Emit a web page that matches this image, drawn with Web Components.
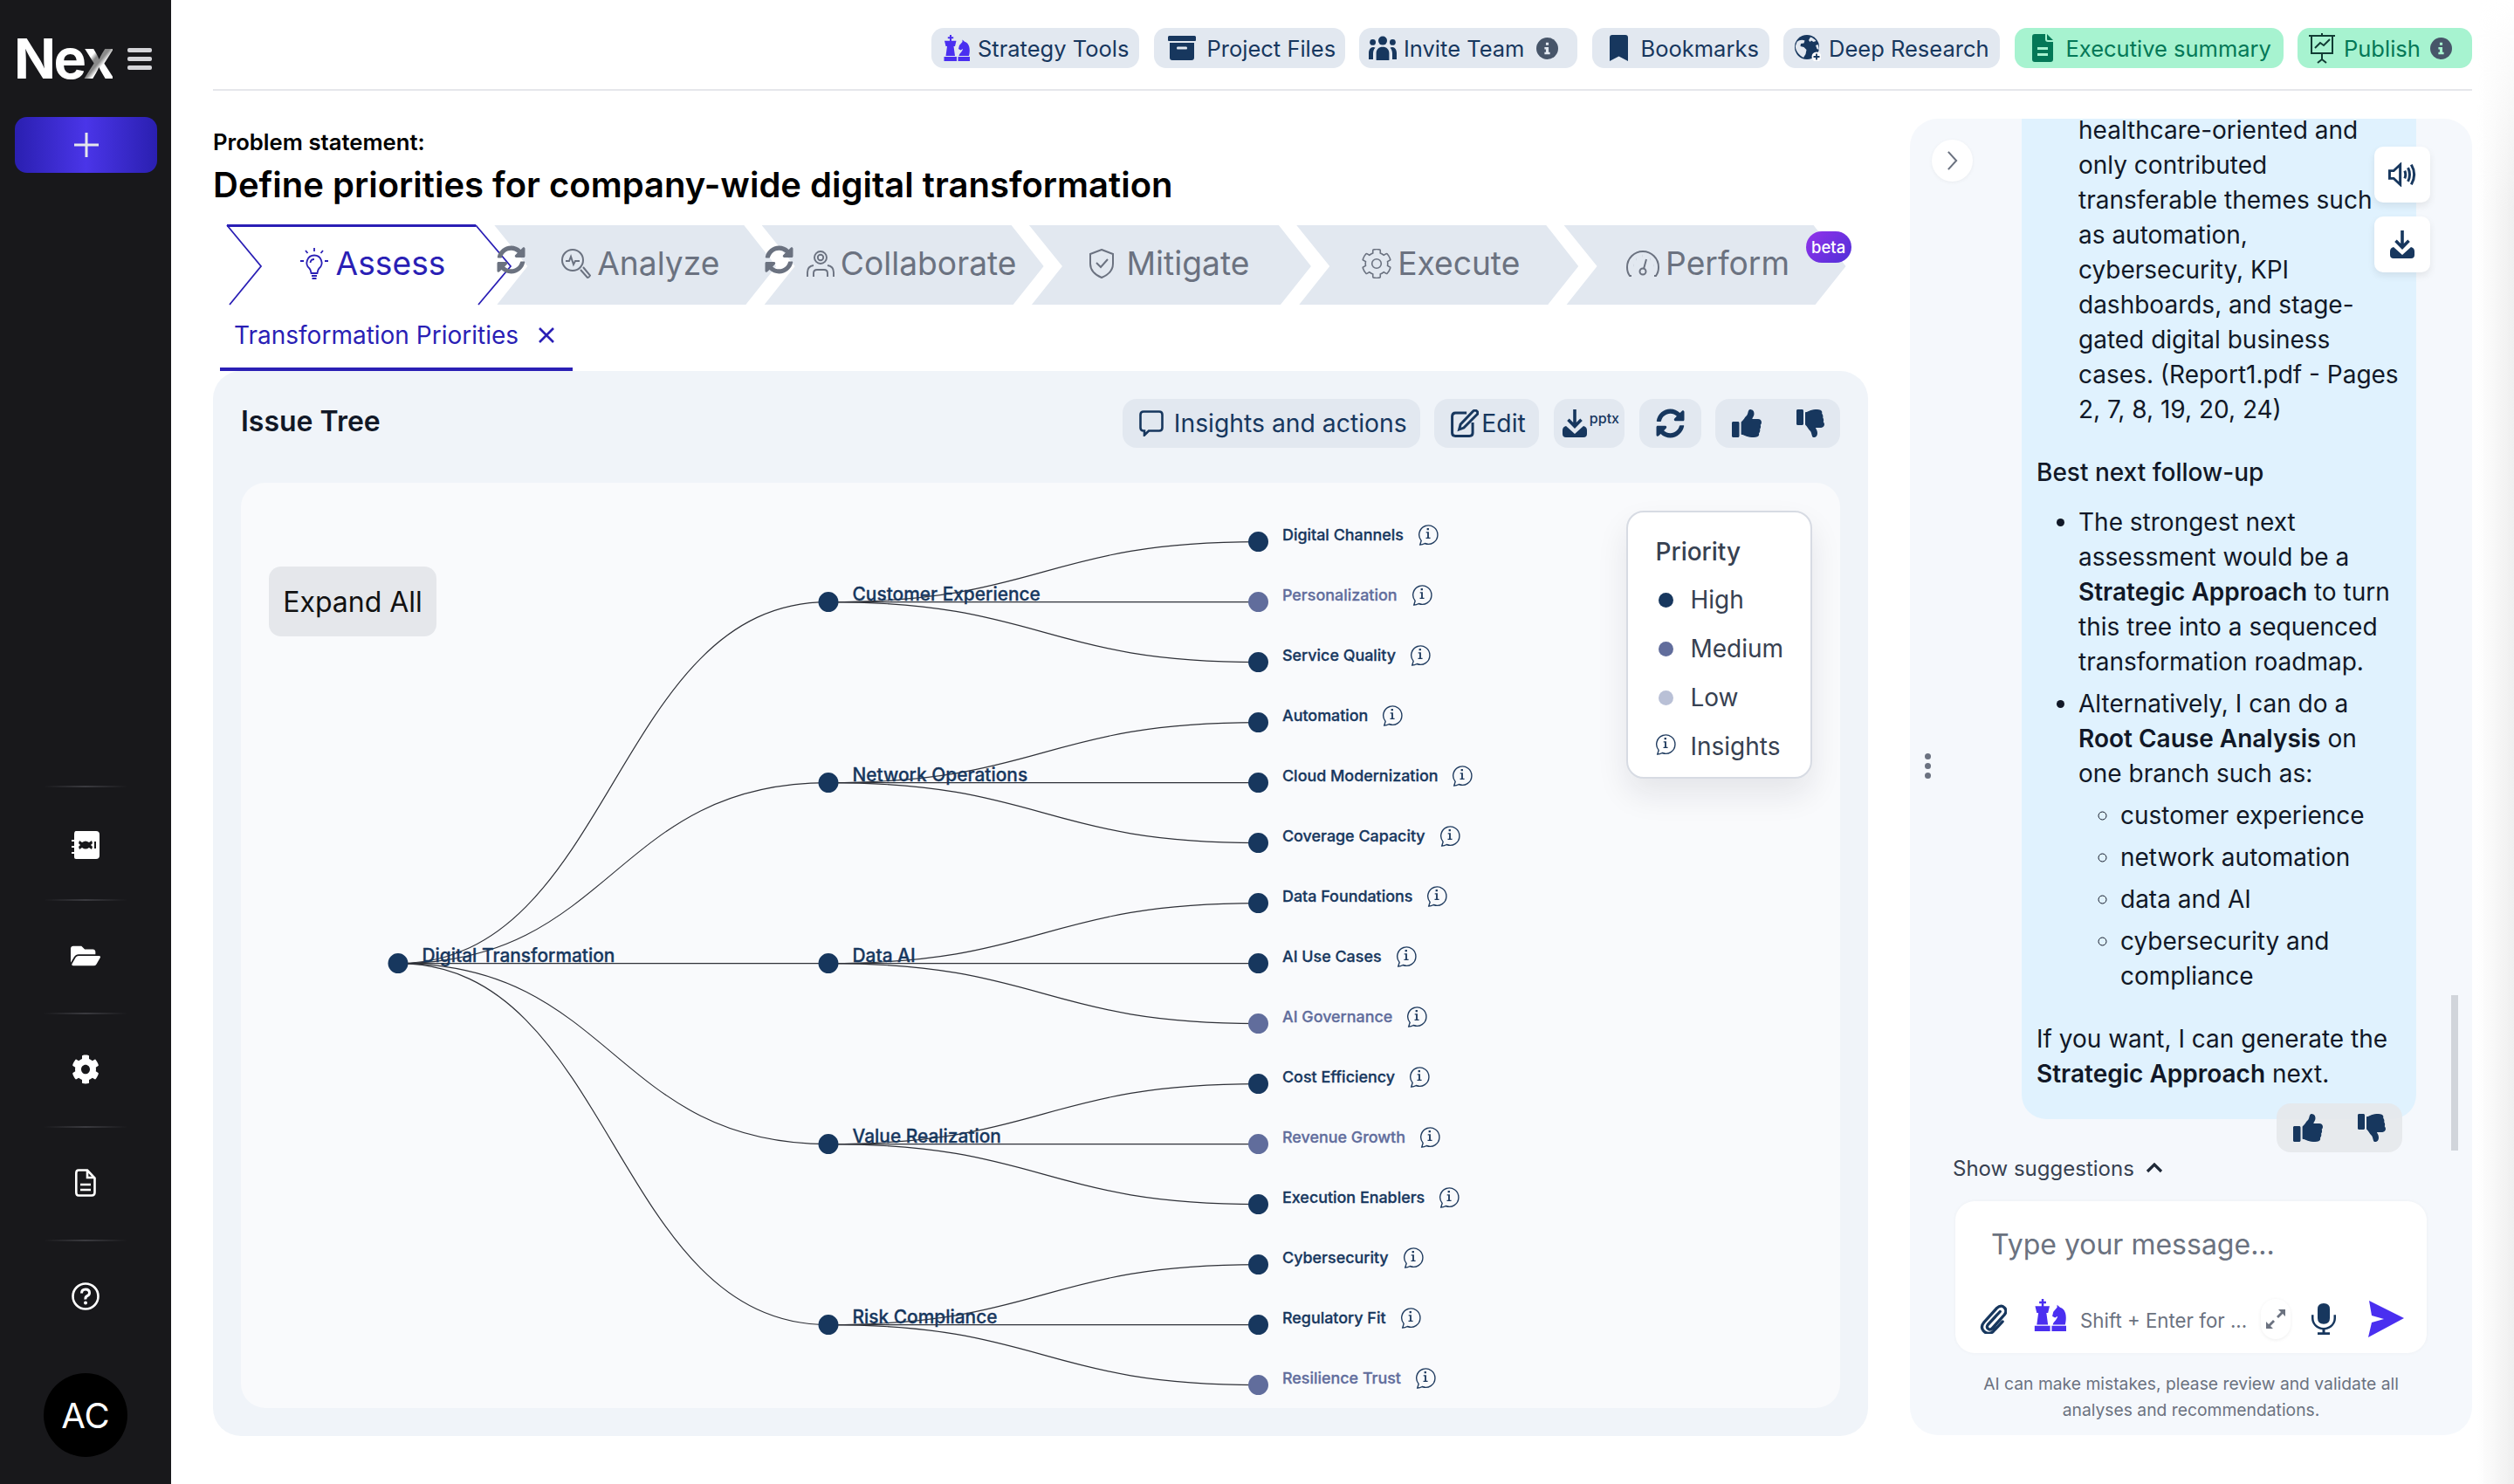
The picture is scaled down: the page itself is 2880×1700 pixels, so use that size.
<!DOCTYPE html>
<html lang="en">
<head>
<meta charset="utf-8">
<title>Nex</title>
<style>
  html, body { margin: 0; padding: 0; background: #fff; }
  body { font-family: Inter, "Noto Sans", "Liberation Sans", sans-serif; color: #111827; }
</style>
</head>
<body>
<app-shell>
  <side-bar slot="side"></side-bar>
  <top-bar slot="top">
    <tool-chip icon="chess" iw="31" ih="30" style="width:238px;--pl:13px;--gap:9px;--icon:#4a2ff0">Strategy Tools</tool-chip>
    <tool-chip icon="archive" iw="32" ih="28" style="width:219px;--pl:16px;--gap:13px">Project Files</tool-chip>
    <tool-chip icon="users" iw="32" ih="28" info style="width:250px;--pl:11px;--gap:8px">Invite Team</tool-chip>
    <tool-chip icon="bookmark" iw="21" ih="30" style="width:203px;--pl:20px;--gap:15px">Bookmarks</tool-chip>
    <tool-chip icon="globe" iw="30" ih="30" style="width:248px;--pl:13px;--gap:9px">Deep Research</tool-chip>
    <tool-chip icon="filegreen" iw="24" ih="32" green style="width:308px;--pl:20px;--gap:15px;--icon:#047857">Executive summary</tool-chip>
    <tool-chip icon="board" iw="30" ih="36" green info style="width:200px;--pl:13px;--gap:10px;--icon:#123c34">Publish</tool-chip>
  </top-bar>
  <problem-head slot="left"></problem-head>
  <step-bar slot="left">
    <step-item active icon="bulb" iw="32" ih="36" style="--shift:11px;--g:9px">Assess</step-item>
    <step-item refresh icon="search" iw="34" ih="34" style="--shift:12px">Analyze</step-item>
    <step-item refresh icon="team" iw="32" ih="30" style="--shift:20px">Collaborate</step-item>
    <step-item icon="shield" iw="30" ih="34" style="--shift:-2px;--g:13px">Mitigate</step-item>
    <step-item icon="cog" iw="34" ih="34" style="--shift:8px">Execute</step-item>
    <step-item beta icon="gauge" iw="38" ih="30" style="--shift:7px">Perform</step-item>
  </step-bar>
  <sub-tab slot="left">Transformation Priorities</sub-tab>
  <issue-card slot="left">
    <tree-canvas></tree-canvas>
  </issue-card>
  <chat-panel slot="right">
    <chat-message></chat-message>
  </chat-panel>
</app-shell>

<script>
const NAVY = '#17375e';
const THUMB = 'M104 224H24c-13.255 0-24 10.745-24 24v240c0 13.255 10.745 24 24 24h80c13.255 0 24-10.745 24-24V248c0-13.255-10.745-24-24-24zM384 81.452c0 42.416-25.97 66.208-33.277 94.548h101.723c33.397 0 59.397 27.746 59.553 58.098.084 17.938-7.546 37.249-19.439 49.197l-.11.11c9.836 23.337 8.237 56.037-9.308 79.469 8.681 25.895-.069 57.704-16.382 74.757 4.298 17.598 2.244 32.575-6.148 44.632C440.202 511.587 389.616 512 346.839 512l-2.845-.001c-48.287-.017-87.806-17.598-119.56-31.725-15.957-7.099-36.821-15.887-52.651-16.178-6.54-.12-11.783-5.457-11.783-11.998v-213.77c0-3.2 1.282-6.271 3.558-8.521 39.614-39.144 56.648-80.587 89.117-113.111 14.804-14.832 20.188-37.236 25.393-58.902C282.515 39.293 291.817 0 312 0c24 0 72 8 72 81.452z';
const SYNC = 'M370.72 133.28C339.458 104.008 298.888 87.962 255.848 88c-77.458.068-144.328 53.178-162.791 126.85-1.344 5.363-6.122 9.15-11.651 9.15H24.103c-7.498 0-13.194-6.807-11.807-14.176C33.933 94.924 134.813 8 256 8c66.448 0 126.791 26.136 171.315 68.685L463.03 40.97C478.149 25.851 504 36.559 504 57.941V192c0 13.255-10.745 24-24 24H345.941c-21.382 0-32.09-25.851-16.971-40.971l41.75-41.749zM32 296h134.059c21.382 0 32.09 25.851 16.971 40.971l-41.75 41.75c31.262 29.273 71.835 45.319 114.876 45.28 77.418-.07 144.315-53.144 162.787-126.849 1.344-5.363 6.122-9.15 11.651-9.15h57.304c7.498 0 13.193 6.807 11.807 14.176C478.067 417.076 377.187 504 256 504c-66.448 0-126.791-26.136-171.315-68.685L48.97 471.03C33.851 486.149 8 475.441 8 454.059V320c0-13.255 10.745-24 24-24z';
const COG = 'M487.4 315.7l-42.6-24.6c4.3-23.2 4.3-47 0-70.2l42.6-24.6c4.9-2.8 7.1-8.6 5.5-14-11.1-35.6-30-67.8-54.7-94.6-3.8-4.1-10-5.1-14.8-2.3L380.8 110c-17.9-15.4-38.5-27.3-60.8-35.1V25.8c0-5.6-3.9-10.5-9.4-11.7-36.7-8.2-74.3-7.8-109.2 0-5.5 1.2-9.4 6.1-9.4 11.7V75c-22.2 7.9-42.8 19.8-60.8 35.1L88.7 85.5c-4.9-2.8-11-1.9-14.8 2.3-24.7 26.7-43.6 58.9-54.7 94.6-1.7 5.4.6 11.2 5.5 14L67.3 221c-4.3 23.2-4.3 47 0 70.2l-42.6 24.6c-4.9 2.8-7.1 8.6-5.5 14 11.1 35.6 30 67.8 54.7 94.6 3.8 4.1 10 5.1 14.8 2.3l42.6-24.6c17.9 15.4 38.5 27.3 60.8 35.1v49.2c0 5.6 3.9 10.5 9.4 11.7 36.7 8.2 74.3 7.8 109.2 0 5.5-1.2 9.4-6.1 9.4-11.7v-49.2c22.2-7.9 42.8-19.8 60.8-35.1l42.6 24.6c4.9 2.8 11 1.9 14.8-2.3 24.7-26.7 43.6-58.9 54.7-94.6 1.5-5.5-.7-11.3-5.6-14.1zM256 336c-44.1 0-80-35.9-80-80s35.9-80 80-80 80 35.9 80 80-35.9 80-80 80z';

// every icon is [viewBox, inner svg]
const ICONS = {
  chess: ['0 0 31 30', '<path fill="currentColor" d="M8 0h2v2.200h2.200v2H10v2.500h5.500L14 13h-1.500L14 24H3.500L5 13H3.500L2 6.700h6V4.200H5.800v-2H8zM1.500 25H16v5H1.500zM17.500 25H31v5H17.500zM18.500 24c.5-3 4-4.500 4.500-8l-2.500 1.500-2.500-1.500 1-4 3.500-4V5.500l2.800 2.500c3 .5 5.500 4 5.500 9.500 0 2.500-.3 4.500-.8 6.500z"/>'],
  archive: ['0 0 32 28', '<path fill="currentColor" fill-rule="evenodd" d="M1.500 0h29Q32 0 32 1.500V5q0 1-1 1H1Q0 6 0 5V1.500Q0 0 1.500 0zM2 8h28v17q0 3-3 3H5q-3 0-3-3zM11 12.500q-1 0-1 1.500t1 1.500h10q1 0 1-1.500t-1-1.500z"/>'],
  users: ['0 0 32 28', '<g fill="currentColor"><circle cx="16" cy="5.600" r="5"/><circle cx="4.600" cy="7.400" r="3.400"/><circle cx="27.400" cy="7.400" r="3.400"/><path d="M8.600 28v-8c0-4.600 3-7.200 7.400-7.200s7.400 2.600 7.400 7.200v8zM0 27v-7c0-4 2-7 5-7 1 0 1.800.2 2.500.7-1.700 1.700-2.500 3.900-2.500 6.600v6.700zM32 27v-7c0-4-2-7-5-7-1 0-1.800.2-2.500.7 1.700 1.700 2.500 3.900 2.500 6.600v6.700z"/></g>'],
  bookmark: ['0 0 21 30', '<path fill="currentColor" d="M3 0h15q3 0 3 3v27l-10.500-5.500L0 30V3q0-3 3-3z"/>'],
  globe: ['0 0 30 30', '<circle cx="14" cy="14" r="14" fill="currentColor"/><path fill="#e2e8f0" d="M2.500 8c2.500-2 6-3 9-1.500l-1 3-3.500.5-.5 3 4 1 3 3-1 5-2.500 4C6 24 1 19 .8 13zM18 2.500c3 1 5 2.500 6.500 4.500l-3 1-2.500-1.500-1.500 1.500-1.500-2zM24 12l2.500-1c1 2 1.300 4 1.200 6l-2.200-1z"/><circle cx="25" cy="25" r="5.500" fill="#fff"/><path stroke="currentColor" stroke-width="1.800" d="M25 21.500v7M21.500 25h7"/>'],
  filegreen: ['0 0 24 32', '<path fill="currentColor" d="M3 0h12v6q0 3 3 3h6v20q0 3-3 3H3q-3 0-3-3V3q0-3 3-3zM17 0l7 7h-6q-1 0-1-1z"/><path fill="#a7f3d0" d="M6 15h12v3H6zM6 22h12v3H6z"/>'],
  board: ['0 0 30 36', '<g fill="none" stroke="currentColor" stroke-width="2"><path d="M0 4h30M3 4v20h24V4M7 18l6-6 4 3 7-7M15 1v3M15 24v7M10 35l5-4 5 4"/></g>'],
  info: ['0 0 24 24', '<circle cx="12" cy="12" r="12" fill="#475569"/><path fill="#e2e8f0" d="M10.500 5.500h3v3h-3zM9 10.500h4.500V16H15v2.500H9V16h1.500v-3H9z"/>'],
  infoG: ['0 0 24 24', '<circle cx="12" cy="12" r="12" fill="#475569"/><path fill="#a7f3d0" d="M10.500 5.500h3v3h-3zM9 10.500h4.500V16H15v2.500H9V16h1.500v-3H9z"/>'],
  bulb: ['0 0 32 36', '<g fill="none" stroke="currentColor" stroke-width="1.800"><path d="M16 8.500a8.500 8.500 0 0 0-5.500 15c1.500 1.500 1.500 3 2 5.500h7c.5-2.500.5-4 2-5.500a8.500 8.500 0 0 0-5.500-15zM13 32h6M13.500 35h5M11.500 17a4.500 4.500 0 0 1 4.500-4"/><path d="M16 0v4M6 3l2.500 3M26 3l-2.500 3M0 15h4M28 15h4"/></g>'],
  search: ['0 0 34 34', '<g fill="none" stroke="currentColor" stroke-width="2"><circle cx="13" cy="13" r="12"/><path d="M5 14h4l2-5 3 9 2-4h5"/><path d="M22 24l8 9q2 0 3-2.500L25 21"/></g>'],
  team: ['0 0 32 30', '<g fill="none" stroke="currentColor" stroke-width="1.900"><circle cx="16" cy="8" r="3.200"/><circle cx="16" cy="8" r="7"/><path d="M1 30v-5q0-7 7-8M31 30v-5q0-7-7-8M8 30v-4q0-4 4-4h8q4 0 4 4v4"/></g>'],
  shield: ['0 0 30 34', '<g fill="none" stroke="currentColor" stroke-width="2"><path d="M15 1l13 5v11c0 8-6 13-13 16C8 30 2 25 2 17V6z"/><path d="M9 16l5 5 8-9"/></g>'],
  cog: ['0 0 512 512', `<path fill="none" stroke="currentColor" stroke-width="24" d="${COG}"/>`],
  gauge: ['0 0 38 30', '<g fill="none" stroke="currentColor" stroke-width="2"><path d="M6 29H4Q1 25 1 19a18 18 0 0 1 36 0q0 6-3 10h-2"/><circle cx="19" cy="24" r="3.500"/><path d="M20 21l3-11"/><path d="M8 17h.1M11 10h.1M18 6h.1M27 10h.1M31 17h.1" stroke-width="2.400"/></g>'],
  sync: ['0 0 512 512', `<path fill="currentColor" d="${SYNC}"/>`],
  up: ['0 0 512 512', `<path fill="currentColor" d="${THUMB}"/>`],
  down: ['0 0 512 512', `<path fill="currentColor" transform="matrix(1 0 0 -1 0 512)" d="${THUMB}"/>`],
  bubble: ['0 0 28 30', '<path fill="none" stroke="currentColor" stroke-width="2.600" d="M5 1.500h18q3.500 0 3.500 3.500v15q0 3.500-3.500 3.500H11l-5 5v-5H5q-3.500 0-3.500-3.500V5Q1.500 1.500 5 1.500z"/>'],
  edit: ['0 0 30 32', '<g fill="none" stroke="currentColor" stroke-width="2.800"><path d="M17 4H5Q1.500 4 1.500 8v19q0 3.500 3.500 3.500h15q3.500 0 3.500-3.500V15"/><path d="M9 23l1.500-6L24 2q2-2 4 0t0 4L14 21z"/></g>'],
  dl: ['0 0 28 32', '<path fill="currentColor" d="M12.200 0h3.600v15l4.500-4.500 2.500 2.500-8.800 9-8.800-9 2.500-2.500 4.500 4.500zM0 24q0-4 4-5l10 9 10-9q4 1 4 5v4q0 4-4 4H4q-4 0-4-4z"/>'],
  speaker: ['0 0 34 32', '<g fill="none" stroke="currentColor" stroke-width="3.200"><path d="M1.500 11v10h5l8 8V3l-8 8z"/><path d="M20 11q2 5 0 10M24 7q4 9 0 18M28 3q7 13 0 26"/></g>'],
  chevR: ['0 0 14 26', '<path fill="none" stroke="currentColor" stroke-width="2.200" d="M2 2l10 11L2 24"/>'],
  chevU: ['0 0 20 12', '<path fill="none" stroke="currentColor" stroke-width="3.200" d="M2 10l8-8 8 8"/>'],
  clip: ['0 0 32 36', '<path fill="none" stroke="currentColor" stroke-width="3.400" stroke-linecap="round" d="M24 9L9.500 25q-2 3 .5 5t5-1L29 13q4-5 0-9t-9 1L5 22q-5 6 0 11t11 0l11-12"/>'],
  expand: ['0 0 24 24', '<path fill="currentColor" d="M15 1h8v8l-3-3-5 5-2-2 5-5zM9 23H1v-8l3 3 5-5 2 2-5 5z"/>'],
  mic: ['0 0 28 38', '<path fill="currentColor" d="M14 0q7 0 7 7v11q0 7-7 7t-7-7V7q0-7 7-7zM2.500 14v4c0 6.500 5 11.500 11.500 11.500S25.500 24.500 25.500 18v-4H28v4c0 7-5 13-12.500 14v3H21v3H7v-3h5.500v-3C5 31 0 25 0 18v-4z"/>'],
  send: ['0 0 42 42', '<path fill="currentColor" d="M2 0l40 20L1 42l4-17 14-4-14-4z"/>'],
  addr: ['0 0 32 32', '<path fill="currentColor" fill-rule="evenodd" d="M5 0h23q4 0 4 4v24q0 4-4 4H5q-2 0-2-2v-4H0v-2h3v-5H0v-2h3v-5H0v-2h3V4q0-4 2-4zM9 11l3 2q4-3 8 0l3-2 1 3-2 2 2 2-1 3-3-2q-4 3-8 0l-3 2-1-3 2-2-2-2zM26 12v8h2v-8z"/>'],
  folder: ['0 0 576 512', '<path fill="currentColor" d="M572.694 292.093L500.27 416.248A63.997 63.997 0 0 1 444.989 448H45.025c-18.523 0-30.064-20.093-20.731-36.093l72.424-124.155A64 64 0 0 1 152 256h399.964c18.523 0 30.064 20.093 20.73 36.093zM152 224h328v-48c0-26.51-21.49-48-48-48H272l-64-64H48C21.49 64 0 85.49 0 112v278.046l69.077-118.418C86.214 242.25 117.989 224 152 224z"/>'],
  gear: ['0 0 512 512', `<path fill="currentColor" d="${COG}"/>`],
  doc: ['0 0 24 32', '<g fill="none" stroke="currentColor" stroke-width="2.600"><path d="M4 1.500h10l8.500 9V27q0 3.500-3.500 3.500H4Q1.300 30.500 1.300 27V5Q1.300 1.500 4 1.500zM14 1.500V10h8.500"/><path d="M6 18h12M6 24h12"/></g>'],
  help: ['0 0 32 32', '<circle cx="16" cy="16" r="14.500" fill="none" stroke="currentColor" stroke-width="2.600"/><path fill="none" stroke="currentColor" stroke-width="3" d="M11.500 12.500q0-4.500 4.500-4.500t4.500 4q0 2.500-2.500 3.500t-2 4"/><circle cx="16" cy="23.500" r="2" fill="currentColor"/>'],
  tip: ['0 0 26 28', '<path fill="none" stroke="currentColor" stroke-width="1.500" d="M3 27l1.500-5A11.500 11.500 0 1 1 9 25.300q-3 1.700-6 1.700z"/><path fill="currentColor" d="M11.500 6.500h2.500v2.500h-2.500zM10.500 11h3.500v7h1.800v1.500h-5.500V18h1.700v-5.500h-1.500z"/>']
};

class UiIcon extends HTMLElement {
  connectedCallback() {
    if (this.shadowRoot) return;
    const [box, inner] = ICONS[this.getAttribute('name')];
    const w = this.getAttribute('w') || 24, h = this.getAttribute('h') || w;
    this.attachShadow({ mode: 'open' }).innerHTML = `
      <style>:host{display:inline-flex;flex:none;width:${w}px;height:${h}px}svg{width:100%;height:100%;display:block}</style>
      <svg viewBox="${box}" preserveAspectRatio="none">${inner}</svg>`;
  }
}
customElements.define('ui-icon', UiIcon);

function define(name, html) {
  const t = document.createElement('template');
  t.innerHTML = html;
  customElements.define(name, class extends HTMLElement {
    constructor() {
      super();
      this.attachShadow({ mode: 'open' }).appendChild(t.content.cloneNode(true));
    }
  });
}

define('app-shell', `
  <style>
    :host { display: flex; position: relative; width: 2880px; height: 1700px; overflow: hidden; background: #fff; }
    main { flex: 1; min-width: 0; padding: 32px 48px 0; }
    .row { display: flex; gap: 48px; margin-top: 32px; }
    .left { width: 1896px; flex: none; }
    .edge { position: absolute; top: 0; right: 0; bottom: 0; width: 42px; pointer-events: none;
      background: linear-gradient(to right, rgba(240,240,240,0), #efefef);
      -webkit-mask-image: linear-gradient(to bottom, transparent 0, #000 240px); }
  </style>
  <slot name="side"></slot>
  <main>
    <slot name="top"></slot>
    <div class="row">
      <div class="left"><slot name="left"></slot></div>
      <slot name="right"></slot>
    </div>
  </main>
  <div class="edge"></div>`);

define('side-bar', `
  <style>
    :host { display: flex; flex-direction: column; flex: none; width: 196px; height: 1700px; background: #18181b; color: #fff; box-sizing: border-box; padding-top: 32px; }
    .brand { display: flex; align-items: center; height: 71px; padding-left: 16px; }
    .logo { font-size: 63px; font-weight: 700; letter-spacing: -2.500px; line-height: 71px; width: 130px; }
    .logo span { background: linear-gradient(130deg, #fff 40%, #8a8a8a 47%, #8a8a8a 55%, #fff 62%); -webkit-background-clip: text; background-clip: text; color: transparent; }
    .burger { display: flex; flex-direction: column; gap: 5px; width: 28px; }
    .burger i { display: block; height: 5px; border-radius: 2px; background: #d4d4d8; }
    .new { display: flex; align-items: center; justify-content: center; margin: 31px 16px 0 17px; height: 64px; border-radius: 14px;
      background: linear-gradient(90deg, #2a1fb0, #4a35e8 50%, #2a1fb0); }
    .nav { margin-top: auto; display: flex; flex-direction: column; align-items: center; }
    .nav a { display: flex; align-items: center; justify-content: center; width: 196px; height: 130px; position: relative; }
    .nav a::before { content: ""; position: absolute; top: 0; left: 50px; width: 96px; height: 2px; background: linear-gradient(90deg, transparent, #3a3a3f 50%, transparent); }
    .nav a:first-child { padding-top: 6px; box-sizing: border-box; }
    .avatar { display: flex; align-items: center; justify-content: center; width: 96px; height: 96px; margin: 23px auto 31px; border-radius: 50%; background: #000; font-size: 40px; }
  </style>
  <div class="brand"><div class="logo">Ne<span>x</span></div><div class="burger"><i></i><i></i><i></i></div></div>
  <div class="new"><svg width="30" height="30" viewBox="0 0 30 30"><path stroke="#e5e7eb" stroke-width="3" d="M15 1v28M1 15h28"/></svg></div>
  <div class="nav">
    <a><ui-icon name="addr" w="32" h="32"></ui-icon></a>
    <a><ui-icon name="folder" w="34" h="30"></ui-icon></a>
    <a><ui-icon name="gear" w="32" h="34"></ui-icon></a>
    <a><ui-icon name="doc" w="24" h="32"></ui-icon></a>
    <a><ui-icon name="help" w="32" h="32"></ui-icon></a>
  </div>
  <div class="avatar">AC</div>`);

define('top-bar', `
  <style>
    :host { display: flex; justify-content: flex-end; gap: 16.500px; padding-bottom: 24px; border-bottom: 2px solid #e5e7eb; }
  </style>
  <slot></slot>`);

class ToolChip extends HTMLElement {
  connectedCallback() {
    if (this.shadowRoot) return;
    const green = this.hasAttribute('green');
    const info = this.hasAttribute('info');
    this.attachShadow({ mode: 'open' }).innerHTML = `
      <style>
        :host { display: inline-flex; align-items: center; height: 46px; padding: 0 12px 0 var(--pl, 13px); gap: var(--gap, 9px); border-radius: 14px;
          background: ${green ? '#a7f3d0' : '#e2e8f0'}; color: ${green ? '#047857' : NAVY}; font-size: 25.500px; white-space: nowrap; box-sizing: border-box; }
        ui-icon.main { color: var(--icon, ${NAVY}); }
        ui-icon.i { margin-left: auto; margin-right: ${green ? 11 : 10}px; }
      </style>
      <ui-icon class="main" name="${this.getAttribute('icon')}" w="${this.getAttribute('iw')}" h="${this.getAttribute('ih')}"></ui-icon>
      <slot></slot>
      ${info ? `<ui-icon class="i" name="${green ? 'infoG' : 'info'}" w="25" h="25"></ui-icon>` : ''}`;
  }
}
customElements.define('tool-chip', ToolChip);

define('problem-head', `
  <style>
    :host { display: block; padding-top: 12px; color: #000; }
    .k { font-size: 25.700px; font-weight: 600; line-height: 30px; }
    h1 { margin: 7px 0 0; font-size: 40px; font-weight: 600; line-height: 54px; }
  </style>
  <div class="k">Problem statement:</div>
  <h1>Define priorities for company-wide digital transformation</h1>`);

define('step-bar', `
  <style>
    :host { display: flex; margin-top: 19px; padding-left: 16px; height: 91px; }
  </style>
  <slot></slot>`);

class StepItem extends HTMLElement {
  connectedCallback() {
    if (this.shadowRoot) return;
    const active = this.hasAttribute('active');
    this.attachShadow({ mode: 'open' }).innerHTML = `
      <style>
        :host { display: flex; position: relative; flex: none; width: 323px; height: 91px; margin-right: -16.700px; align-items: center; justify-content: center;
          font-size: 37.200px; color: ${active ? '#2a1fb5' : '#6b7280'}; }
        .bg { position: absolute; inset: 0; background: #e2e8f0; clip-path: polygon(0 0, 286px 0, 323px 47px, 288px 91px, 3px 91px, 38px 47px); }
        .line { position: absolute; left: 0; top: 0; overflow: visible; }
        .body { position: relative; display: flex; align-items: center; gap: var(--g, 7px); margin-left: var(--shift, 4px); margin-top: -4px; }
        .sync { position: absolute; left: 3px; top: 23px; color: #6b7280; }
        .beta { position: absolute; left: 277px; top: 7px; width: 52px; height: 36px; border-radius: 18px; display: flex; align-items: center; justify-content: center;
          background: linear-gradient(135deg, #9333ea, #4f2fd8); color: #fff; font-size: 18.500px; font-weight: 500; }
      </style>
      ${active
        ? '<svg class="line" width="326" height="91"><path fill="none" stroke="#2a1fb5" stroke-width="1.800" d="M0 0L39 47L3 91M285 0L325 47L288 91"/><path stroke="#2a1fb5" stroke-width="3" d="M0 0.500H285"/></svg>'
        : '<div class="bg"></div>'}
      <div class="body"><ui-icon name="${this.getAttribute('icon')}" w="${this.getAttribute('iw')}" h="${this.getAttribute('ih')}"></ui-icon><slot></slot></div>
      ${this.hasAttribute('refresh') ? '<ui-icon class="sync" name="sync" w="33" h="33"></ui-icon>' : ''}
      ${this.hasAttribute('beta') ? '<div class="beta">beta</div>' : ''}`;
  }
}
customElements.define('step-item', StepItem);

define('sub-tab', `
  <style>
    :host { display: flex; align-items: center; gap: 22px; box-sizing: border-box; width: 404px; height: 76px; margin-left: 8px; padding: 0 0 2px 16px; border-bottom: 4px solid #2a1fb5; color: #2a1fb5; font-size: 28px; white-space: nowrap; }
  </style>
  <slot></slot>
  <svg width="20" height="20" viewBox="0 0 20 20"><path stroke="#2a1fb5" stroke-width="2.600" d="M2 2l16 16M18 2L2 18"/></svg>`);

define('issue-card', `
  <style>
    :host { display: block; box-sizing: border-box; width: 1896px; height: 1220px; padding: 32px; background: #f0f4f9; border-radius: 32px; }
    header { display: flex; align-items: center; height: 56px; margin-bottom: 40px; }
    h2 { margin: -5px auto 0 0; font-size: 32px; font-weight: 600; color: #111827; }
    .acts { display: flex; gap: 16.500px; }
    .btn { display: flex; align-items: center; height: 56px; border-radius: 16px; background: #e2e8f0; color: ${NAVY}; font-size: 28.300px; box-sizing: border-box; white-space: nowrap; }
    sup { font-size: 16px; font-weight: 500; align-self: flex-start; margin: 14px 0 0 3px; line-height: 1; }
  </style>
  <header>
    <h2>Issue Tree</h2>
    <div class="acts">
      <div class="btn" style="padding:0 16px 0 19px;gap:12px;width:341px"><ui-icon name="bubble" w="28" h="30"></ui-icon>Insights and actions</div>
      <div class="btn" style="padding:0 15px 0 19px;gap:3px;width:120px"><ui-icon name="edit" w="32" h="32"></ui-icon>Edit</div>
      <div class="btn" style="padding:0 6px 0 10px"><ui-icon name="dl" w="28" h="32"></ui-icon><sup>pptx</sup></div>
      <div class="btn" style="padding:0 19px"><ui-icon name="sync" w="33" h="34"></ui-icon></div>
      <div class="btn" style="padding:0 18px 0 19px;gap:40px"><ui-icon name="up" w="34" h="32"></ui-icon><ui-icon name="down" w="32" h="32"></ui-icon></div>
    </div>
  </header>
  <slot></slot>`);

const TREE = [
  ['Customer Experience', [['Digital Channels', 1], ['Personalization', 2], ['Service Quality', 1]]],
  ['Network Operations', [['Automation', 1], ['Cloud Modernization', 1], ['Coverage Capacity', 1]]],
  ['Data AI', [['Data Foundations', 1], ['AI Use Cases', 1], ['AI Governance', 2]]],
  ['Value Realization', [['Cost Efficiency', 1], ['Revenue Growth', 2], ['Execution Enablers', 1]]],
  ['Risk Compliance', [['Cybersecurity', 1], ['Regulatory Fit', 1], ['Resilience Trust', 2]]]
];
const COLORS = { 1: NAVY, 2: '#616d9c' };

class TreeCanvas extends HTMLElement {
  connectedCallback() {
    if (this.shadowRoot) return;
    const link = (x0, y0, x1, y1) => {
      const m = (x0 + x1) / 2;
      return `<path d="M${x0} ${y0}C${m} ${y0} ${m} ${y1} ${x1} ${y1}"/>`;
    };
    const dot = (x, y, c) => `<circle cx="${x}" cy="${y}" r="11.500" fill="${c}"/>`;
    const label = (x, y, name, cls, c, tip) =>
      `<div class="lbl ${cls}" style="left:${x + 27.5}px;top:${y - (tip ? 23.5 : 24)}px;color:${c}">${name}${tip ? '<ui-icon name="tip" w="24" h="26"></ui-icon>' : ''}</div>`;
    const rootX = 180, rootY = 550.6, midX = 673, leafX = 1165.5;
    let links = '', dots = dot(rootX, rootY, NAVY), labels = label(rootX, rootY, 'Digital Transformation', 'big', NAVY);
    TREE.forEach(([name, leaves], i) => {
      const y = rootY + (i - 2) * 207;
      links += link(rootX, rootY, midX, y);
      dots += dot(midX, y, NAVY);
      labels += label(midX, y, name, 'big', NAVY);
      leaves.forEach(([leaf, p], j) => {
        const ly = y + (j - 1) * 69;
        links += link(midX, y, leafX, ly);
        dots += dot(leafX, ly, COLORS[p]);
        labels += label(leafX, ly, leaf, 'leaf', COLORS[p], true);
      });
    });
    this.attachShadow({ mode: 'open' }).innerHTML = `
      <style>
        :host { display: block; position: relative; width: 1832px; height: 1060px; background: #f9fafc; border-radius: 28px; }
        svg.links { position: absolute; inset: 0; }
        .lbl { position: absolute; display: flex; align-items: center; gap: 16px; height: 30px; white-space: nowrap; font-weight: 500; -webkit-text-stroke: .3px currentColor; }
        .big { font-size: 20.900px; }
        .leaf { font-size: 17.900px; }
        ui-icon { color: #1f3b5f; }
        .expand { position: absolute; left: 32px; top: 96px; width: 192px; height: 80px; display: flex; align-items: center; justify-content: center; border-radius: 14px; background: #e5e7eb; color: #111; font-size: 32px; }
        priority-legend { position: absolute; left: 1586.500px; top: 32px; }
      </style>
      <svg class="links" width="1832" height="1060"><g fill="none" stroke="#2f3138" stroke-width="1.150">${links}</g>${dots}</svg>
      ${labels}
      <div class="expand">Expand All</div>
      <priority-legend></priority-legend>`;
  }
}
customElements.define('tree-canvas', TreeCanvas);

define('priority-legend', `
  <style>
    :host { display: block; box-sizing: border-box; width: 213.500px; height: 307px; padding: 25px 0 0 32px; background: #fff; border: 2.500px solid #d7dbe3; border-radius: 20px; box-shadow: 0 18px 36px rgba(17,24,39,.09); color: #374151; font-size: 28px; }
    .t { font-weight: 500; line-height: 40px; margin-bottom: 7px; }
    .r { display: flex; align-items: center; height: 56px; }
    .s { width: 40px; flex: none; padding-left: 3px; box-sizing: border-box; }
    i { display: block; width: 17px; height: 17px; border-radius: 50%; }
    ui-icon { margin-left: -4px; color: #1f3b5f; }
  </style>
  <div class="t">Priority</div>
  <div class="r"><div class="s"><i style="background:${NAVY}"></i></div>High</div>
  <div class="r"><div class="s"><i style="background:#616d9c"></i></div>Medium</div>
  <div class="r"><div class="s"><i style="background:#b9c0d6"></i></div>Low</div>
  <div class="r"><div class="s"><ui-icon name="tip" w="24" h="26"></ui-icon></div>Insights</div>`);

define('chat-panel', `
  <style>
    :host { display: flex; flex-direction: column; position: relative; box-sizing: border-box; width: 644px; height: 1508px; background: #f5f8fc; border-radius: 32px; }
    .msgs { position: relative; height: 1184px; flex: none; overflow: hidden; padding-left: 128px; box-sizing: border-box; }
    .collapse { position: absolute; left: 25px; top: 24px; width: 47px; height: 48px; border-radius: 50%; background: #fff; display: flex; align-items: center; justify-content: center; color: #6b7280; box-shadow: 0 1px 4px rgba(0,0,0,.05); }
    .float { position: absolute; left: 532px; width: 64px; height: 64px; border-radius: 10px; background: #fff; display: flex; align-items: center; justify-content: center; color: ${NAVY}; box-shadow: 0 4px 8px rgba(0,0,0,.08); }
    .dots { position: absolute; left: 17px; top: 727px; display: flex; flex-direction: column; gap: 4px; }
    .dots i { width: 7px; height: 7px; border-radius: 50%; background: #6b7280; }
    .scroll { position: absolute; left: 620px; top: 1004px; width: 8px; height: 178px; background: #d1d5db; }
    .rate { position: absolute; left: 420px; top: 1128px; width: 144px; height: 56px; border-radius: 16px; background: rgba(229,231,235,.88); display: flex; align-items: center; justify-content: center; gap: 40px; color: ${NAVY}; }
    .sugg { display: flex; align-items: center; gap: 13px; height: 36px; padding-left: 49px; font-size: 24px; color: #374151; }
    .input { display: flex; flex-direction: column; box-sizing: border-box; width: 540px; height: 174px; margin: 20px 0 0 52px; background: #fff; border-radius: 22px; box-shadow: 0 0 4px rgba(0,0,0,.04); }
    .ph { padding: 28px 0 0 41px; font-size: 32px; line-height: 44px; color: #6b7280; }
    .tools { display: flex; align-items: center; height: 78px; margin-top: auto; padding: 0 26px 0 28px; color: ${NAVY}; }
    .hint { flex: 1; margin-left: 16px; font-size: 22.300px; color: #6b7280; white-space: nowrap; padding-top: 3px; }
    .exp { display: flex; align-items: center; justify-content: center; width: 34px; height: 46px; border-radius: 17px; color: #6b7280; box-shadow: 0 1px 4px rgba(0,0,0,.07); }
    .note { margin: 20px 48px 0; text-align: center; font-size: 19.300px; line-height: 30px; color: #6b7280; }
  </style>
  <div class="msgs"><slot></slot>
    <div class="collapse"><ui-icon name="chevR" w="13" h="24"></ui-icon></div>
    <div class="float" style="top:32px"><ui-icon name="speaker" w="32" h="28"></ui-icon></div>
    <div class="float" style="top:112px"><ui-icon name="dl" w="28" h="32"></ui-icon></div>
    <div class="dots"><i></i><i></i><i></i></div>
    <div class="scroll"></div>
    <div class="rate"><ui-icon name="up" w="34" h="32"></ui-icon><ui-icon name="down" w="32" h="32"></ui-icon></div>
  </div>
  <div class="sugg">Show suggestions <ui-icon name="chevU" w="20" h="12" style="color:#1f2937"></ui-icon></div>
  <div class="input">
    <div class="ph">Type your message...</div>
    <div class="tools">
      <ui-icon name="clip" w="31" h="34"></ui-icon>
      <ui-icon name="chess" w="38" h="37" style="color:#4a2ff0;margin:-10px 0 0 30px"></ui-icon>
      <div class="hint">Shift + Enter for ...</div>
      <div class="exp"><ui-icon name="expand" w="24" h="24"></ui-icon></div>
      <ui-icon name="mic" w="28" h="36" style="margin-left:24px"></ui-icon>
      <ui-icon name="send" w="42" h="42" style="color:#4a2ff0;margin-left:36px"></ui-icon>
    </div>
  </div>
  <div class="note">AI can make mistakes, please review and validate all analyses and recommendations.</div>`);

define('chat-message', `
  <style>
    :host { display: block; box-sizing: border-box; width: 452px; margin-top: -7.500px; padding: 0 16px 32.500px 17px; background: #e0f2fe; border-radius: 0 0 28px 28px; font-size: 28px; line-height: 40px; color: #111827; }
    p { margin: 0; }
    p.tail { padding-left: 48px; }
    p.gap { margin-top: 32px; }
    ul { margin: 17px 0 0; padding-left: 48px; list-style: disc; }
    li + li { margin-top: 8px; }
    ul ul { margin-top: 8px; list-style: circle; }
    b { font-weight: 600; }
    .h { font-weight: 500; }
  </style>
  <p class="tail">healthcare-oriented and only contributed transferable themes such as automation, cybersecurity, KPI dashboards, and stage-gated digital business cases. (Report1.pdf - Pages 2, 7, 8, 19, 20, 24)</p>
  <p class="gap h">Best next follow-up</p>
  <ul>
    <li>The strongest next assessment would be a <b>Strategic Approach</b> to turn this tree into a sequenced transformation roadmap.</li>
    <li>Alternatively, I can do a <b>Root Cause Analysis</b> on one branch such as:
      <ul>
        <li>customer experience</li>
        <li>network automation</li>
        <li>data and AI</li>
        <li>cybersecurity and compliance</li>
      </ul>
    </li>
  </ul>
  <p class="gap">If you want, I can generate the <b>Strategic Approach</b> next.</p>`);
</script>
</body>
</html>
